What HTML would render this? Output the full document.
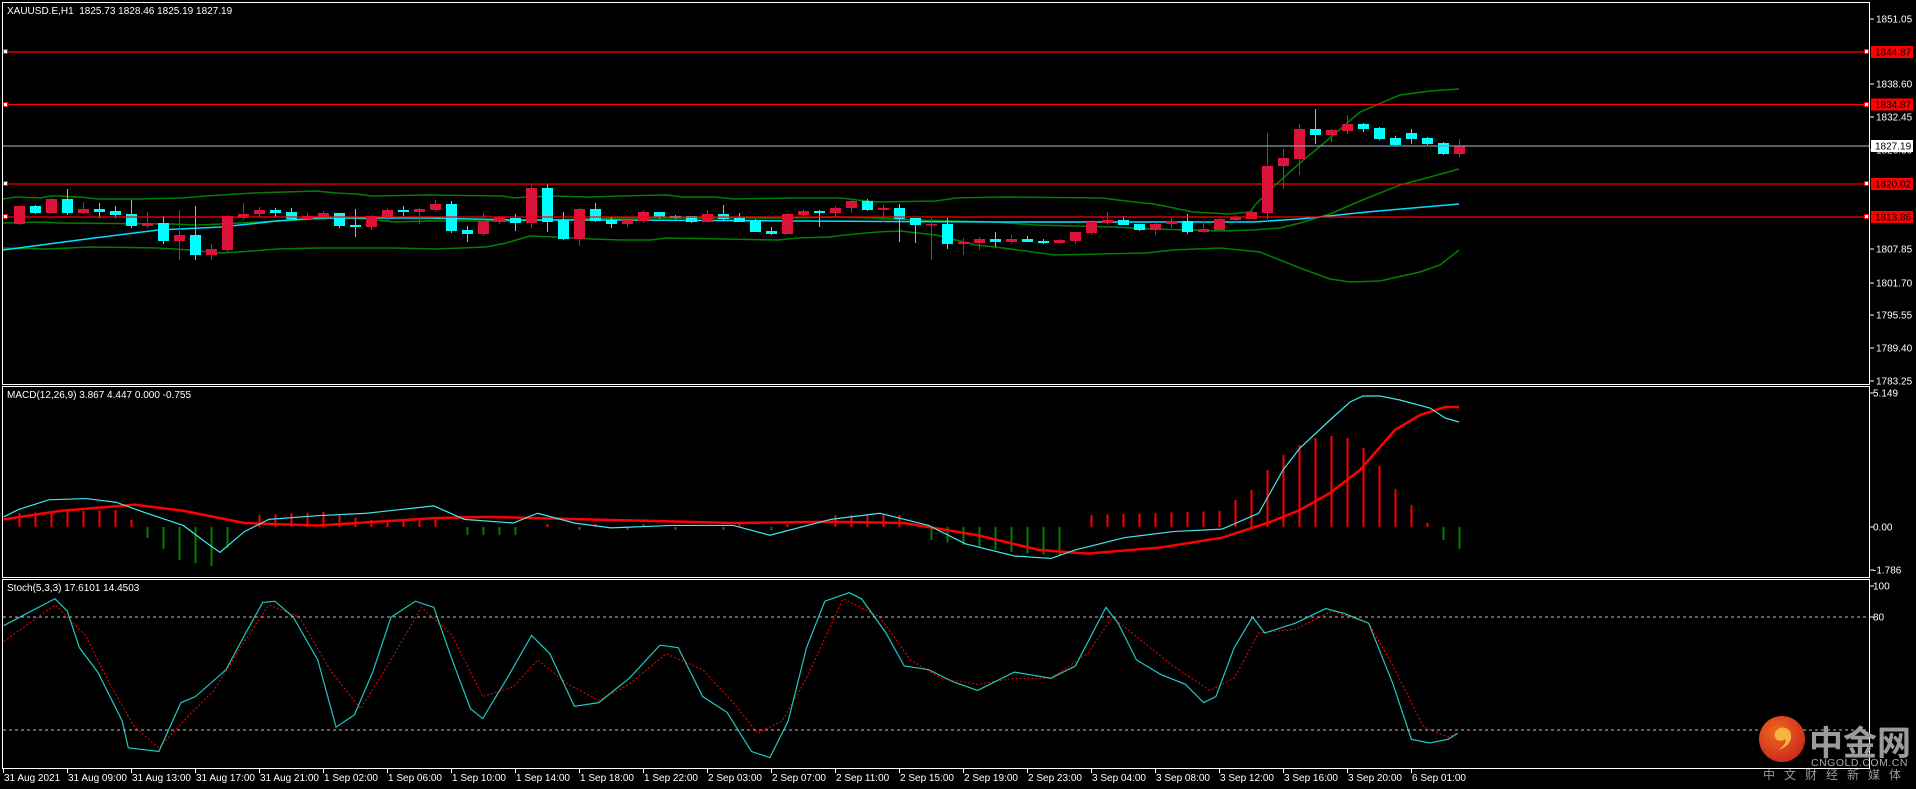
<!DOCTYPE html>
<html><head><meta charset="utf-8"><style>
html,body{margin:0;padding:0;background:#000;width:1916px;height:789px;overflow:hidden}
svg{display:block}
text{font-family:"Liberation Sans",sans-serif;font-size:10px;fill:#fff}
</style></head><body>
<svg id="s" width="1916" height="789" xmlns="http://www.w3.org/2000/svg">
<rect width="1916" height="789" fill="#000"/>
<g id="bands"></g>
<g id="candles"></g>
<g stroke-width="1.2">
<line x1="3" y1="52" x2="1870" y2="52" stroke="#ff0000"/>
<line x1="3" y1="104.5" x2="1870" y2="104.5" stroke="#ff0000"/>
<line x1="3" y1="146" x2="1870" y2="146" stroke="#8c96a8"/>
<line x1="3" y1="184" x2="1870" y2="184" stroke="#ff0000"/>
<line x1="3" y1="217" x2="1870" y2="217" stroke="#ff0000"/>
</g>
<g fill="#fff" stroke="#ff0000" stroke-width="1">
<rect x="3.5" y="49.5" width="4" height="4"/><rect x="1864.5" y="49.5" width="4" height="4"/>
<rect x="3.5" y="102.5" width="4" height="4"/><rect x="1864.5" y="102.5" width="4" height="4"/>
<rect x="3.5" y="181.5" width="4" height="4"/><rect x="1864.5" y="181.5" width="4" height="4"/>
<rect x="3.5" y="214.5" width="4" height="4"/><rect x="1864.5" y="214.5" width="4" height="4"/>
</g>
<g id="macd"></g>
<g id="stoch"></g>
<line x1="3" y1="617" x2="1870" y2="617" stroke="#c0c0c0" stroke-dasharray="3,3"/>
<line x1="3" y1="730" x2="1870" y2="730" stroke="#c0c0c0" stroke-dasharray="3,3"/>
<g fill="none" stroke="#fff" stroke-width="1">
<rect x="2.5" y="2.5" width="1867" height="382"/>
<rect x="2.5" y="386.5" width="1867" height="191"/>
<rect x="2.5" y="579.5" width="1867" height="189"/>
</g>
<text x="7" y="14">XAUUSD.E,H1&#160;&#160;1825.73 1828.46 1825.19 1827.19</text>
<text x="7" y="398">MACD(12,26,9) 3.867 4.447 0.000 -0.755</text>
<text x="7" y="591">Stoch(5,3,3) 17.6101 14.4503</text>
<g id="axis"></g>
<rect x="1871" y="46" width="42" height="12" fill="#ff0000"/><text x="1875" y="55.5" style="fill:#000">1844.87</text>
<rect x="1871" y="98.5" width="42" height="12" fill="#ff0000"/><text x="1875" y="108" style="fill:#000">1834.87</text>
<rect x="1871" y="140" width="42" height="12" fill="#fff"/><text x="1875" y="149.5" style="fill:#000">1827.19</text>
<rect x="1871" y="178" width="42" height="12" fill="#ff0000"/><text x="1875" y="187.5" style="fill:#000">1820.02</text>
<rect x="1871" y="211" width="42" height="12" fill="#ff0000"/><text x="1875" y="220.5" style="fill:#000">1813.86</text>
<g id="time"></g>
<defs><radialGradient id="lg" cx="0.4" cy="0.35" r="0.7"><stop offset="0" stop-color="#f06a20"/><stop offset="1" stop-color="#c8281a"/></radialGradient></defs>
<circle cx="1782" cy="739" r="23" fill="url(#lg)"/>
<path d="M1776 731c4-6 14-4 15 4c1 8-6 13-13 15c6-4 9-8 7-11c-3 3-9 2-10-2c-1-2 0-4 1-6z" fill="#f5b640"/>
<text x="1809" y="755" style="font-family:'Noto Sans CJK SC',sans-serif;font-size:34px;font-weight:bold;fill:#9b9b9b">中金网</text>
<text x="1811" y="766" style="font-size:10.5px;fill:#aaa;letter-spacing:0.5px">CNGOLD.COM.CN</text>
<text x="1763" y="779" style="font-family:'Noto Sans CJK SC',sans-serif;font-size:12px;fill:#999;letter-spacing:9px">中文财经新媒体</text>
</svg>
<script>
var NS="http://www.w3.org/2000/svg";
function el(p,t,a){var e=document.createElementNS(NS,t);for(var k in a)e.setAttribute(k,a[k]);p.appendChild(e);return e;}
function pl(p,pts,col,w,extra){var a={points:pts.map(function(q){return q[0]+","+q[1]}).join(" "),fill:"none",stroke:col,"stroke-width":w};for(var k in extra)a[k]=extra[k];return el(p,"polyline",a);}
var C=[["r",206,224,206,225],["c",206,213,205,214],["r",199,213,198,213],["c",199,213,189,215],["r",209,213,202,214],["c",209,212,203,218],["c",211,215,206,218],["c",214,226,200,228],["r",223,226,212,228],["c",223,241,216,244],["r",235,241,210,260],["c",235,255,206,260],["r",249,255,244,260],["r",216,250,215,252],["r",214,218,203,220],["r",210,214,207,217],["c",210,213,208,217],["c",212,219,208,219],["r",216,219,213,219],["r",213,217,211,217],["c",213,226,213,228],["c",225,227,209,237],["r",216,227,215,230],["r",210,217,208,222],["c",210,212,206,216],["r",209,212,208,224],["r",204,210,200,212],["c",204,231,201,233],["c",230,234,226,242],["r",221,234,213,236],["r",217,222,216,224],["c",218,223,214,231],["r",188,223,185,228],["c",188,222,184,232],["c",220,239,212,240],["r",209,239,208,246],["c",209,221,203,222],["c",220,224,217,228],["r",220,224,219,227],["r",212,221,210,223],["c",212,217,212,219],["c",216,218,215,219],["c",216,222,216,223],["r",214,222,210,223],["c",214,219,205,221],["c",218,222,213,222],["c",220,232,219,232],["c",231,234,227,235],["r",214,234,213,234],["r",211,215,209,218],["c",211,213,210,227],["r",208,213,206,217],["r",201,208,200,213],["c",201,210,199,211],["r",208,210,205,222],["c",208,219,204,242],["c",218,225,218,243],["r",224,225,218,260],["c",224,244,218,249],["r",242,244,238,255],["r",239,243,237,250],["c",239,242,232,247],["r",239,242,235,244],["c",239,242,236,242],["c",241,243,239,244],["r",240,243,239,244],["r",232,241,232,244],["r",222,233,220,235],["r",220,223,212,225],["c",220,225,216,225],["c",224,230,224,231],["r",224,230,222,235],["r",221,224,217,228],["c",221,232,214,234],["r",229,232,221,233],["r",219,230,218,231],["r",217,220,215,223],["r",212,219,209,219],["r",166,213,133,222],["r",158,166,149,189],["r",129,159,124,175],["c",129,135,109,144],["r",130,135,129,142],["r",124,131,115,134],["c",124,129,123,132],["c",128,139,127,140],["c",138,145,136,146],["c",133,139,129,144],["c",138,144,137,145],["c",143,154,142,155],["r",146,154,139,157]];
var B=document.getElementById("bands");
var up=[[3,199],[16,197],[40,198],[51,196],[59,196],[79,197],[99,199],[138,199],[182,198],[206,196],[237,194],[253,193],[285,192],[316,191],[336,193],[356,194],[372,196],[427,195],[502,196],[514,198],[526,197],[554,196],[589,197],[620,196],[667,195],[683,197],[715,197],[734,199],[794,198],[841,198],[857,200],[877,202],[936,201],[956,198],[1003,197],[1102,198],[1134,202],[1154,204],[1169,207],[1193,212],[1230,214],[1250,212],[1255,205],[1270,190],[1300,163],[1330,138],[1360,112],[1400,95],[1430,91],[1459,89]];
var mid=[[3,223],[43,222],[59,223],[170,224],[198,225],[221,224],[277,221],[316,219],[348,217],[395,222],[427,221],[506,221],[620,218],[790,218],[837,217],[877,218],[916,220],[956,221],[995,222],[1035,225],[1074,226],[1114,227],[1154,229],[1220,231],[1253,230],[1280,228],[1300,223],[1330,214],[1360,201],[1400,185],[1430,177],[1459,169]];
var lo=[[3,248],[47,249],[91,247],[158,248],[190,250],[221,253],[253,251],[277,249],[316,248],[395,248],[435,249],[486,247],[506,243],[530,236],[554,237],[593,239],[620,240],[651,240],[667,238],[778,240],[798,238],[829,237],[845,235],[877,232],[900,231],[936,235],[956,240],[976,245],[995,247],[1055,255],[1146,253],[1173,250],[1220,248],[1260,252],[1300,268],[1330,279],[1350,282],[1380,281],[1420,272],[1440,265],[1459,250]];
var ma=[[3,250],[79,240],[158,230],[221,227],[277,221],[316,218],[427,218],[514,220],[620,220],[800,221],[1000,222],[1253,222],[1300,219],[1367,212],[1459,204]];
pl(B,up,"#008000",1.5);pl(B,mid,"#008000",1.5);pl(B,lo,"#008000",1.5);pl(B,ma,"#00e0ff",1.5);
var G=document.getElementById("candles");
C.forEach(function(c,i){var x=14+16*i,cx=x+5.5,col=c[0]=="r"?"#dc143c":"#00ffff";
el(G,"line",{x1:cx,y1:c[3],x2:cx,y2:c[4],stroke:col,"stroke-width":1});
el(G,"rect",{x:x,y:c[1],width:11,height:Math.max(1.5,c[2]-c[1]),fill:col});});
var M=document.getElementById("macd");
var H={0:513,6:510,7:520,8:538,10:560,12:566,13:548,14:527,15:515,19:512,22:520,26:520,27:527,28:535,31:535,32:527,42:527,50:527,51:515,55:515,56:527,57:540,62:552,65:556,66:527,67:515,75:511,76:500,77:490,78:470,79:455,80:445,81:438,82:436,83:438,84:448,85:466,86:489,87:505,88:523,89:540,90:549};
var keys=Object.keys(H).map(Number).sort(function(a,b){return a-b});
for(var i=0;i<=90;i++){var v;if(H[i]!==undefined)v=H[i];else{var a=0,b=90;for(var j=0;j<keys.length;j++){if(keys[j]<i)a=keys[j];if(keys[j]>i){b=keys[j];break;}}v=H[a]+(H[b]-H[a])*(i-a)/(b-a);if(i>32&&i<50)v=527+((i%3)-1)*3;}
var cx=19.5+16*i;if(Math.abs(v-527)<1)continue;
el(M,"line",{x1:cx,y1:527,x2:cx,y2:v,stroke:v<527?"#ff0000":"#008000","stroke-width":2});}
var mc=[[3,423],[15,417],[40,409],[70,408],[95,411],[120,420],[150,430],[170,445],[180,452],[200,435],[220,425],[260,422],[300,420],[355,414],[380,425],[420,428],[440,420],[470,428],[500,432],[550,430],[600,430],[630,438],[680,425],[720,420],[760,430],[790,445],[830,455],[860,457],[880,450],[920,440],[960,435],[1000,433],[1030,420]].map(function(q){return [q[0]*1.222,q[1]*1.222]});
mc=mc.concat([[1283,470],[1300,448],[1330,420],[1350,402],[1363,396],[1380,396],[1400,400],[1430,408],[1445,418],[1459,422]]);
var ms=[[3,425],[50,418],[110,413],[150,418],[200,428],[260,430],[355,424],[400,423],[480,425],[600,428],[680,427],[740,428],[800,438],[850,450],[890,453],[950,448],[1000,440],[1040,427]].map(function(q){return [q[0]*1.222,q[1]*1.222]});
ms=ms.concat([[1300,510],[1330,493],[1360,470],[1395,430],[1420,415],[1445,407],[1459,407]]);
pl(M,ms,"#ff0000",2.5);pl(M,mc,"#40e8f0",1.2);
var S=document.getElementById("stoch");
var sc=[[3,512],[20,503],[45,490],[55,500],[65,530],[80,550],[100,590],[105,612],[130,615],[148,575],[160,570],[185,548],[200,520],[215,493],[225,492],[240,505],[260,540],[275,595],[290,585],[305,550],[320,505],[340,492],[355,497],[370,540],[385,580],[395,588],[415,555],[435,520],[450,535],[470,578],[490,575],[515,555],[540,528],[555,530],[575,570],[595,583],[615,615],[630,620],[645,590],[660,530],[675,492],[695,485],[705,490],[725,518],[740,545],[760,548],[780,558],[800,565],[830,550],[860,555],[880,545],[905,497],[915,510],[930,540],[950,552],[970,560],[985,575],[995,570],[1010,530],[1025,505],[1035,518],[1060,510],[1085,498],[1100,502],[1120,510],[1140,560],[1155,605],[1170,608],[1185,605],[1193,600]].map(function(q){return [q[0]*1.222,q[1]*1.222]});
var ss=[[3,525],[45,495],[70,520],[90,560],[110,595],[130,612],[155,585],[175,565],[200,525],[220,495],[245,505],[270,548],[295,580],[320,540],[345,497],[370,520],[395,570],[420,562],[440,540],[465,560],[490,573],[515,560],[545,535],[575,548],[600,575],[620,600],[640,590],[660,555],[690,490],[720,505],[745,540],[770,555],[800,560],[830,555],[860,555],[890,535],[910,505],[935,525],[960,545],[990,565],[1010,555],[1030,518],[1060,515],[1090,500],[1120,510],[1140,545],[1165,595],[1185,603],[1193,600]].map(function(q){return [q[0]*1.222,q[1]*1.222]});
pl(S,ss,"#ff0000",1,{"stroke-dasharray":"2,2"});pl(S,sc,"#20c8c0",1.2);
var A=document.getElementById("axis");
[["1851.05",19],["1838.60",84],["1826.30",150],["1832.45",117],["1807.85",249],["1801.70",283],["1795.55",315],["1789.40",348],["1783.25",381],["5.149",393],["0.00",527],["-1.786",570],["100",586],["80",617]].forEach(function(a){
el(A,"line",{x1:1870,y1:a[1],x2:1874,y2:a[1],stroke:"#fff"});var t=el(A,"text",{x:a[0].length<7?1873:1876,y:a[1]+3.5});t.textContent=a[0];});
var T=document.getElementById("time");
["31 Aug 2021","31 Aug 09:00","31 Aug 13:00","31 Aug 17:00","31 Aug 21:00","1 Sep 02:00","1 Sep 06:00","1 Sep 10:00","1 Sep 14:00","1 Sep 18:00","1 Sep 22:00","2 Sep 03:00","2 Sep 07:00","2 Sep 11:00","2 Sep 15:00","2 Sep 19:00","2 Sep 23:00","3 Sep 04:00","3 Sep 08:00","3 Sep 12:00","3 Sep 16:00","3 Sep 20:00","6 Sep 01:00"].forEach(function(s,k){var x=3+64*k;
el(T,"line",{x1:x+0.5,y1:769,x2:x+0.5,y2:773,stroke:"#fff"});var t=el(T,"text",{x:x+1,y:781});t.textContent=s;});
</script>
</body></html>
